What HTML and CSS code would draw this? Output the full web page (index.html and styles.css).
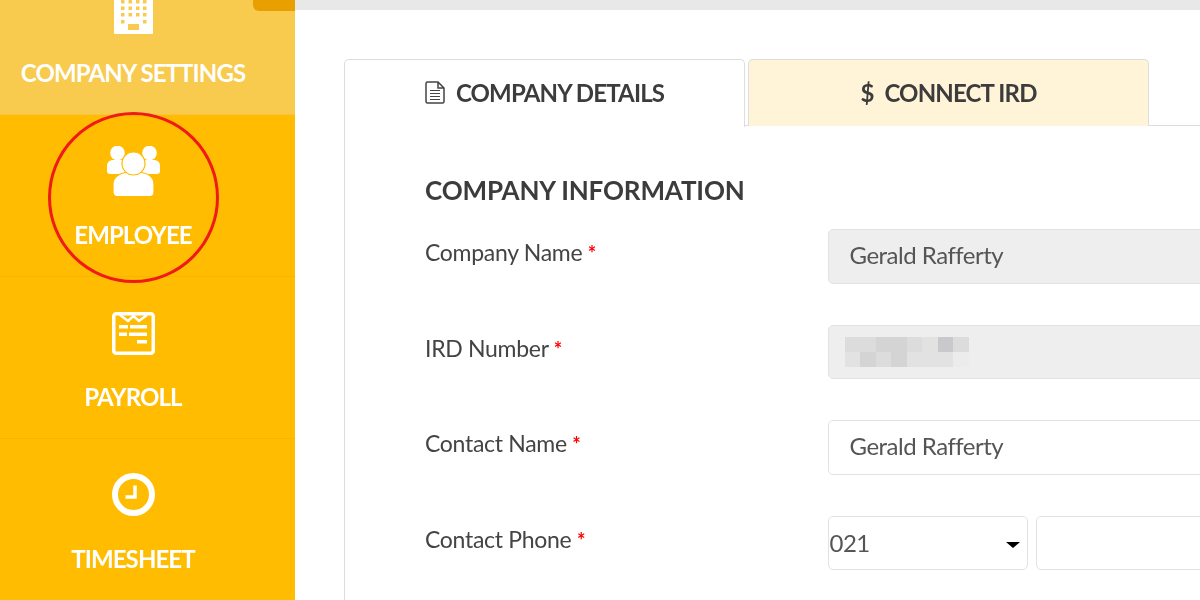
FILE: index.html
```html
<!DOCTYPE html>
<html lang="en">
<head>
<meta charset="utf-8">
<title>Company Settings</title>
<link rel="stylesheet" href="styles.css">
</head>
<body>
<div class="page">
  <nav class="sidebar">
    <a class="nav-item nav-first active">
      <svg class="nav-icon icon-building" viewBox="0 0 39 50"><path fill-rule="evenodd" fill="#fff" d="M1 0H38a1 1 0 0 1 1 1V49a1 1 0 0 1-1 1H1a1 1 0 0 1-1-1V1a1 1 0 0 1 1-1ZM14 40V46H25V40ZM7 16v3.500h3.500v-3.500ZM14.500 16v3.500h3.500v-3.500ZM22 16v3.500h3.500v-3.500ZM29 16v3.500h3.500v-3.500ZM7 22.500v3.500h3.500v-3.500ZM14.500 22.500v3.500h3.500v-3.500ZM22 22.500v3.500h3.500v-3.500ZM29 22.500v3.500h3.500v-3.500ZM7 29v3.500h3.500v-3.500ZM14.500 29v3.500h3.500v-3.500ZM22 29v3.500h3.500v-3.500ZM29 29v3.500h3.500v-3.500ZM7 36v3.500h3.500v-3.500ZM29 36v3.500h3.500v-3.500Z"/></svg>
      <span class="nav-label">COMPANY SETTINGS</span>
    </a>
    <a class="nav-item">
      <svg class="nav-icon icon-people" viewBox="0 0 53 50"><g fill="#fff"><circle cx="10.500" cy="7" r="7.300"/><circle cx="42.500" cy="7" r="7.300"/><path d="M0 20c0-4 3-6 6-6h41c3 0 6 2 6 6v5c0 2-1 3-3 3H3c-2 0-3-1-3-3Z"/></g><g fill="#fff" stroke="#ffbc00" stroke-width="1.200"><path d="M6 38c0-7 6-12 20.500-12s20.500 5 20.500 12v8c0 3-2 4.500-4 4.500H10c-2 0-4-1.500-4-4.500Z"/><circle cx="26.500" cy="17.500" r="11.500"/></g></svg>
      <span class="nav-label">EMPLOYEE</span>
    </a>
    <a class="nav-item">
      <svg class="nav-icon icon-payroll" viewBox="0 0 43 43"><rect x="1.750" y="1.750" width="39.500" height="39.500" rx="2.500" fill="none" stroke="#fff" stroke-width="3.500"/><path d="M8 3l8 6 5.500-5 5.500 5 8-6" fill="none" stroke="#fff" stroke-width="2.500"/><path d="M7 13h9v3.500H7ZM18 13h17v3.500H18ZM7 20.500h8v3.500H7ZM17 20.500h18v3.500H17ZM25 28h10v3.500H25Z" fill="#fff"/></svg>
      <span class="nav-label">PAYROLL</span>
    </a>
    <a class="nav-item">
      <svg class="nav-icon icon-clock" viewBox="0 0 43 43"><circle cx="21.500" cy="21.500" r="18.500" fill="none" stroke="#fff" stroke-width="6"/><path d="M23 12.500v11.500h-9.500" fill="none" stroke="#fff" stroke-width="3.500"/></svg>
      <span class="nav-label">TIMESHEET</span>
    </a>
  </nav>
  <span class="highlight-ring"></span>
  <main class="main">
    <header class="topbar"><span class="topbar-tab"></span></header>
    <section class="content">
      <div class="tabs">
        <div class="tab tab-active">
          <svg class="tab-icon" viewBox="0 0 20 23"><path d="M1 2.500A1.500 1.500 0 0 1 2.500 1H13l6 6v13.500a1.500 1.500 0 0 1-1.500 1.500h-15A1.500 1.500 0 0 1 1 20.500ZM13 1v6h6" fill="none" stroke="#444" stroke-width="1.500"/><path d="M5 9.500h10M5 12.500h10M5 15.500h10M5 18.500h10" stroke="#444" stroke-width="1.200"/></svg>
          <span>COMPANY DETAILS</span>
        </div>
        <div class="tab tab-ird"><span class="dollar">$</span><span>CONNECT IRD</span></div>
      </div>
      <div class="panel">
        <h2 class="panel-title">COMPANY INFORMATION</h2>
        <div class="form-row">
          <label class="form-label">Company Name <span class="req">*</span></label>
          <div class="field field-disabled">Gerald Rafferty</div>
        </div>
        <div class="form-row">
          <label class="form-label">IRD Number <span class="req">*</span></label>
          <div class="field field-disabled">
            <div class="redacted">
              <i class="s2"></i><i class="s2"></i><i class="s3"></i><i class="s3"></i><i class="s2"></i><i class="s1"></i><i class="s4"></i><i class="s2"></i>
              <i class="s1"></i><i class="s3"></i><i class="s2"></i><i class="s3"></i><i class="s1"></i><i class="s1"></i><i class="s1"></i><i class="s0"></i>
            </div>
          </div>
        </div>
        <div class="form-row">
          <label class="form-label">Contact Name <span class="req">*</span></label>
          <div class="field">Gerald Rafferty</div>
        </div>
        <div class="form-row">
          <label class="form-label">Contact Phone <span class="req">*</span></label>
          <div class="phone">
            <div class="field field-select">021</div>
            <div class="field"></div>
          </div>
        </div>
      </div>
    </section>
  </main>
</div>
</body>
</html>
```
FILE: styles.css
```css
* { box-sizing: border-box; }
html, body { margin: 0; height: 600px; overflow: hidden; background: #fff; }
body { font-family: Lato, "Open Sans", sans-serif; color: #444; }
.page { display: flex; position: relative; height: 600px; overflow: hidden; filter: blur(0.35px); }

.sidebar { flex: 0 0 295px; background: #ffbc00; display: flex; flex-direction: column; }
.nav-item { flex: 0 0 162px; display: flex; flex-direction: column; align-items: center; padding-right: 29px; border-bottom: 1px solid #f9b400; position: relative; color: #fff; }
.nav-first { margin-top: -47px; }
.active { background: #f8ca4d; border-bottom-color: #f8c441; }
.nav-icon { position: absolute; }
.icon-building { width: 39px; height: 50px; top: 31px; }
.icon-people { width: 53px; height: 50px; top: 31px; }
.icon-payroll { width: 43px; height: 43px; top: 35px; }
.icon-clock { width: 43px; height: 43px; top: 34px; }
.nav-label { margin-top: 105px; font-size: 24px; line-height: 30px; font-weight: 700; letter-spacing: -0.9px; white-space: nowrap; }

.highlight-ring { position: absolute; left: 48px; top: 112px; width: 171px; height: 171px; border: 3.500px solid #f01a1a; border-radius: 50%; }

.main { flex: 1; min-width: 0; display: flex; flex-direction: column; }
.topbar { height: 10px; background: #e8e8e8; position: relative; flex: none; }
.topbar-tab { position: absolute; left: -42px; top: 0; width: 42px; height: 11px; background: #e89f00; border-bottom-left-radius: 6px; }
.content { padding: 49px 0 0 49px; width: 1100px; }

.tabs { display: flex; gap: 3px; height: 67px; border-bottom: 1.500px solid #ddd; }
.tab { width: 401px; height: 67px; display: flex; align-items: center; justify-content: center; font-size: 24px; font-weight: 700; color: #3c3c3c; letter-spacing: -0.85px; border: 1.500px solid #ddd; border-bottom: 0; border-radius: 5px 5px 0 0; }
.tab-active { background: #fff; height: 68px; padding-bottom: 3px; gap: 11px; position: relative; }
.tab-ird { background: #fff4d8; padding-bottom: 2px; gap: 11px; }
.tab-icon { width: 20px; height: 23px; }

.panel { border-left: 1.500px solid #ddd; padding: 47px 0 0 80px; }
.panel-title { margin: 0 0 22px; font-size: 26px; line-height: 34px; font-weight: 700; color: #3c3c3c; letter-spacing: -0.15px; }
.form-row { display: flex; height: 95.670px; }
.form-label { flex: 0 0 402.500px; font-size: 23px; line-height: 46px; color: #444; letter-spacing: -0.3px; }
.req { color: #f00; font-size: 20px; font-weight: 700; }
.field { flex: 1; min-width: 0; height: 54.500px; padding: 0 21px; font-size: 24px; line-height: 50px; color: #555; letter-spacing: -0.5px; background: #fff; border: 1.500px solid #e2e2e2; border-radius: 5px; }
.field-disabled { background: #eee; }
.redacted { display: grid; grid-template-columns: repeat(8, 15.500px); grid-auto-rows: 15px; margin: 11px 0 0 -5px; filter: blur(0.6px); }
.s0 { background: #ececec; }
.s1 { background: #e2e2e2; }
.s2 { background: #dcdcdc; }
.s3 { background: #d4d4d4; }
.s4 { background: #c9c9cb; }
.phone { flex: 1; display: flex; gap: 8px; }
.field-select { flex: 0 0 200px; padding: 0 1px; line-height: 52px; position: relative; }
.field-select::after { content: ""; position: absolute; right: 7px; top: 25px; border: 7px solid transparent; border-top: 6px solid #000; border-bottom: 0; }
```
